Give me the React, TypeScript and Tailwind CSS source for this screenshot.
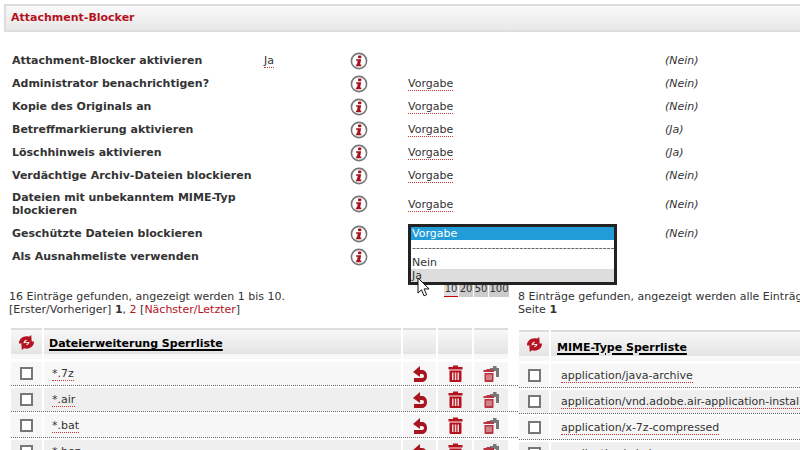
const font = { fontFamily: '"DejaVu Sans", Verdana, sans-serif' };

const settings = [
  { label: "Attachment-Blocker aktivieren", value: "Ja", def: "(Nein)", own: true },
  { label: "Administrator benachrichtigen?", value: "Vorgabe", def: "(Nein)" },
  { label: "Kopie des Originals an", value: "Vorgabe", def: "(Nein)" },
  { label: "Betreffmarkierung aktivieren", value: "Vorgabe", def: "(Ja)" },
  { label: "Löschhinweis aktivieren", value: "Vorgabe", def: "(Ja)" },
  { label: "Verdächtige Archiv-Dateien blockieren", value: "Vorgabe", def: "(Nein)" },
  { label: "Dateien mit unbekanntem MIME-Typ blockieren", value: "Vorgabe", def: "(Nein)", tall: true },
  { label: "Geschützte Dateien blockieren", value: "", def: "(Nein)" },
  { label: "Als Ausnahmeliste verwenden", value: "", def: "" },
];

const extensions = ["*.7z", "*.air", "*.bat", "*.bez"];
const mimeTypes = [
  "application/java-archive",
  "application/vnd.adobe.air-application-installer-package+zip",
  "application/x-7z-compressed",
  "application/x-bzip",
];

function InfoIcon() {
  return (
    <svg width="18" height="18" viewBox="0 0 18 18" aria-hidden>
      <circle cx="9" cy="9" r="7.6" fill="#fff" stroke="#777" strokeWidth="1.6" />
      <rect x="8" y="3.4" width="3.4" height="2.8" rx="1" fill="#a5121f" />
      <path d="M6.200 7.200h5l-1.100 5.400h1.200v1.600H5.800l.3-1.600h.9l.7-3.800H6z" fill="#a5121f" />
    </svg>
  );
}

function RefreshIcon() {
  return (
    <svg width="17" height="15" viewBox="0 0 18 16" aria-hidden>
      <path d="M1 9C.8 3.400 6.800.2 11.600 1.800L14 0l.6 7.200-7.200.4 2.200-2.300C7.800 4.800 6 6 5.800 9z" fill="#b5121f" />
      <path d="M17 7c.2 5.600-5.800 8.800-10.600 7.200L4 16l-.6-7.200 7.200-.4-2.200 2.300c1.800.5 3.600-.7 3.800-3.700z" fill="#b5121f" />
    </svg>
  );
}

function UndoIcon() {
  return (
    <svg width="14" height="16" viewBox="0 0 14 16" aria-hidden>
      <path d="M7 0 0 6l7 5V8h2c1.500 0 2 1 2 2s-.5 2-2 2H1v4h8c3 0 5-2.500 5-6s-2-6-5-6H7z" fill="#a8141f" />
    </svg>
  );
}

function TrashIcon() {
  return (
    <svg width="15" height="17" viewBox="0 0 15 17" aria-hidden>
      <path d="M5 2V.6h5V2h4.500v2.500H.5V2z" fill="#b5121f" />
      <path d="M1.500 5.500h12V16a1 1 0 0 1-1 1h-10a1 1 0 0 1-1-1z" fill="#b5121f" />
      <path d="M4 7.500h1.500V15H4zM6.800 7.500h1.500V15H6.800zM9.500 7.500H11V15H9.500z" fill="#f5d5d5" />
    </svg>
  );
}

function TrashAllIcon() {
  return (
    <svg width="16" height="17" viewBox="0 0 16 17" aria-hidden>
      <path d="M7 3h3V1h3.500v2H16v9h-3V6H7z" fill="#777" />
      <path d="M3.500 5V4h4v1h3.500v2H.5V5z" fill="#b73440" />
      <path d="M1.500 8h9v8a1 1 0 0 1-1 1h-7a1 1 0 0 1-1-1z" fill="#b73440" />
      <path d="M3.500 9.500h1V15h-1zM5.500 9.500h1V15h-1zM7.500 9.500h1V15h-1z" fill="#ecc" />
    </svg>
  );
}

function ListTable({ title, rows, tools }: { title: string; rows: string[]; tools: boolean }) {
  const columns = tools ? "grid-cols-[31px_357px_33px_34px_34px]" : "grid-cols-[30px_400px]";
  const head = "h-[26px] border-t-2 border-[#ddd] bg-gradient-to-b from-[#f8f8f8] to-[#e4e4e5]";
  const cell = "flex h-[23px] items-center justify-center";
  return (
    <div>
      <div className={`grid ${columns} gap-x-[2px]`}>
        <div className={`${head} flex items-center justify-center`}>
          <RefreshIcon />
        </div>
        <div className={`${head} flex items-center font-bold text-black underline decoration-2 underline-offset-2 ${tools ? "pl-[5px] pt-[5px]" : "pl-[6px] pt-[8px]"}`}>
          {title}
        </div>
        {tools && <div className={head} />}
        {tools && <div className={head} />}
        {tools && <div className={head} />}
      </div>
      <div className={`grid ${columns} mb-[3px] gap-x-[2px]`}>
        <div className="h-[5px] bg-[#f8f8f8]" />
        <div className="h-[5px] bg-[#f8f8f8]" />
        {tools && <div className="h-[5px] bg-[#f8f8f8]" />}
        {tools && <div className="h-[5px] bg-[#f8f8f8]" />}
        {tools && <div className="h-[5px] bg-[#f8f8f8]" />}
      </div>
      {rows.map((row, i) => {
        const bg = i % 2 ? "bg-[#efefef]" : "bg-[#f7f7f7]";
        return (
          <div key={row} className={`grid ${columns} mb-[2px] gap-x-[2px] border-b border-dotted border-[#666]`}>
            <div className={`${cell} ${bg}`}>
              <span className="block h-[13px] w-[13px] border-2 border-[#777] bg-white" />
            </div>
            <div className={`flex h-[23px] items-center whitespace-nowrap pt-px ${tools ? "pl-[8px]" : "pl-[10px]"} ${bg}`}>
              <span className="border-b border-dotted border-[#c33] leading-[13px]">{row}</span>
            </div>
            {tools && <div className={`${cell} ${bg}`}><UndoIcon /></div>}
            {tools && <div className={`${cell} ${bg}`}><TrashIcon /></div>}
            {tools && <div className={`${cell} ${bg}`}><TrashAllIcon /></div>}
          </div>
        );
      })}
    </div>
  );
}

export default function App() {
  return (
    <div className="h-[450px] w-[800px] overflow-hidden bg-white pl-[4px] pt-[4px] text-[11px] text-[#333]" style={font}>
      <div className="flex h-[28px] w-[800px] items-center border-2 border-r-0 border-[#ddd] bg-gradient-to-b from-[#f9f9f9] to-[#e8e8e8] pl-[5px] font-bold text-[#b5121f]">
        Attachment-Blocker
      </div>

      <div className="relative mt-[17px] pl-[8px]">
        {settings.map((s) => (
          <div key={s.label} className={`grid grid-cols-[252px_86px_58px_257px_1fr] items-center ${s.tall ? "mb-[2px] h-[33px] leading-[13px]" : "h-[23px]"}`}>
            <div className="w-[250px] pt-px font-bold">{s.label}</div>
            <div className="pt-px">
              {s.own && <span className="border-b border-dotted border-[#c33] leading-[13px]">{s.value}</span>}
            </div>
            <div className="flex items-center"><InfoIcon /></div>
            <div className="pt-px">
              {!s.own && s.value && <span className="border-b border-dotted border-[#c33] leading-[13px]">{s.value}</span>}
            </div>
            <div className="pt-px italic">{s.def}</div>
          </div>
        ))}

        {/* geöffnetes Auswahlfeld */}
        <div className="absolute left-[404px] top-[175px] z-10 w-[209px] border-[3px] border-[#222] bg-white leading-[13px]">
          <div className="h-[13px] bg-[#229cd9] pl-[1px] text-white">Vorgabe</div>
          <div className="flex h-[15px] items-center overflow-hidden whitespace-nowrap pl-[1px] text-[#555]">--------------------------------------------------------------</div>
          <div className="h-[14px] pl-[1px] pt-[1px]">Nein</div>
          <div className="h-[13px] bg-[#ddd] pl-[1px]">Ja</div>
        </div>
        <svg className="absolute left-[413px] top-[228px] z-20" width="14" height="20" viewBox="0 0 14 20" aria-hidden>
          <path d="M1 1v15l3.500-3.200 2.500 6 2.600-1.100-2.500-5.800h5z" fill="#fff" stroke="#111" strokeWidth="1" />
        </svg>
      </div>

      <div className="relative mt-[14px] flex">
        <div className="-ml-[4px] w-[518px] shrink-0">
          <div className="h-[32px] pl-[9px] pt-[1px] leading-[13px]">
            <div className="mt-[7px]">16 Einträge gefunden, angezeigt werden 1 bis 10.</div>
            <div>
              [Erster/Vorheriger] <b>1</b>, <span className="text-[#b5121f]">2</span> [<span className="text-[#b5121f]">Nächster/Letzter</span>]
            </div>
          </div>
          <div className="absolute left-[440px] top-0 flex gap-[1px] text-[10px] leading-[13px]">
            <span className="h-[15px] w-[14px] border-b border-[#c00] bg-[#ddd] text-center">10</span>
            <span className="h-[15px] w-[14px] bg-[#ccc] text-center">20</span>
            <span className="h-[15px] w-[14px] bg-[#ccc] text-center">50</span>
            <span className="h-[15px] w-[20px] bg-[#ccc] text-center">100</span>
          </div>
          <div className="mt-[14px] pl-[11px]">
            <ListTable title="Dateierweiterung Sperrliste" rows={extensions} tools />
          </div>
        </div>
        <div className="w-[400px] shrink-0">
          <div className="h-[32px] pt-[1px] leading-[13px]">
            <div className="mt-[7px] whitespace-nowrap">8 Einträge gefunden, angezeigt werden alle Einträge</div>
            <div>Seite <b>1</b></div>
          </div>
          <div className="mt-[16px] pl-px">
            <ListTable title="MIME-Type Sperrliste" rows={mimeTypes} tools={false} />
          </div>
        </div>
      </div>
    </div>
  );
}
